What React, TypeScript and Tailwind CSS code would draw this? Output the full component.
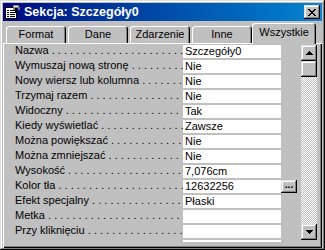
const rows: { label: string; value: string; builder?: boolean }[] = [
  { label: "Nazwa", value: "Szczegóły0" },
  { label: "Wymuszaj nową stronę", value: "Nie" },
  { label: "Nowy wiersz lub kolumna", value: "Nie" },
  { label: "Trzymaj razem", value: "Nie" },
  { label: "Widoczny", value: "Tak" },
  { label: "Kiedy wyświetlać", value: "Zawsze" },
  { label: "Można powiększać", value: "Nie" },
  { label: "Można zmniejszać", value: "Nie" },
  { label: "Wysokość", value: "7,076cm" },
  { label: "Kolor tła", value: "12632256", builder: true },
  { label: "Efekt specjalny", value: "Płaski" },
  { label: "Metka", value: "" },
  { label: "Przy kliknięciu", value: "" },
  { label: "", value: "" },
];

const tabs = ["Format", "Dane", "Zdarzenie", "Inne"];

const dots = " . . . . . . . . . . . . . . . . . . . . . . . . . . . . . .";

const raised =
  "shadow-[inset_-1px_-1px_#000,inset_1px_1px_#dfdfdf,inset_-2px_-2px_#808080,inset_2px_2px_#fff]";

function SheetIcon() {
  return (
    <svg width="16" height="16" viewBox="0 0 16 16" shapeRendering="crispEdges">
      <rect x="0.5" y="3.5" width="11" height="11" fill="#fff" stroke="#000" />
      <rect x="2" y="6" width="2" height="1" fill="#000" />
      <rect x="5" y="6" width="5" height="1" fill="#000" />
      <rect x="2" y="8" width="2" height="1" fill="#000" />
      <rect x="5" y="8" width="5" height="1" fill="#000" />
      <rect x="2" y="10" width="2" height="1" fill="#000" />
      <rect x="5" y="10" width="5" height="1" fill="#000" />
      <rect x="2" y="12" width="2" height="1" fill="#000" />
      <rect x="5" y="12" width="5" height="1" fill="#000" />
      <path d="M8 1h6v2h1v3h-2v-2h-3v2h-2z" fill="#808080" />
      <path d="M9 2h4v1h-4z" fill="#fff" />
      <path d="M10 4h2v5h-2z" fill="#000" />
    </svg>
  );
}

function Arrow({ down }: { down?: boolean }) {
  return (
    <svg width="7" height="4" viewBox="0 0 7 4" shapeRendering="crispEdges">
      {down ? (
        <path d="M0 0h7v1h-1v1h-1v1h-1v1h-1v-1h-1v-1h-1v-1h-1z" fill="#000" />
      ) : (
        <path d="M3 0h1v1h1v1h1v1h1v1h-7v-1h1v-1h1v-1h1z" fill="#000" />
      )}
    </svg>
  );
}

export default function App() {
  return (
    <div
      className={`w-[325px] h-[250px] bg-[#c0c0c0] p-[3px] flex flex-col overflow-hidden text-black font-['Liberation_Sans',Arial,sans-serif] ${raised}`}
    >
      <div className="h-[18px] shrink-0 flex items-center pl-[2px] pr-[2px] bg-gradient-to-r from-[#000080] to-[#1084d0]">
        <SheetIcon />
        <span className="ml-[3px] text-white font-bold text-[12.5px] leading-none">
          Sekcja: Szczegóły0
        </span>
        <div className={`ml-auto w-[16px] h-[14px] bg-[#c0c0c0] flex items-center justify-center ${raised}`}>
          <svg width="8" height="7" viewBox="0 0 8 7" shapeRendering="crispEdges">
            <path
              d="M0 0h2v1h1v1h2v-1h1v-1h2v1h-1v1h-1v1h-1v1h1v1h1v1h1v1h-2v-1h-1v-1h-2v1h-1v1h-2v-1h1v-1h1v-1h1v-1h-1v-1h-1v-1h-1z"
              fill="#000"
            />
          </svg>
        </div>
      </div>

      <div className="mt-[1px] h-[21px] shrink-0 flex items-end pl-[3px] gap-[2px] text-[11px] relative z-10">
        {tabs.map((t) => (
          <div
            key={t}
            className="w-[60px] h-[17px] rounded-t-[3px] flex items-center justify-center shadow-[inset_1px_1px_#fff,inset_-1px_0_#000,inset_-2px_0_#808080]"
          >
            {t}
          </div>
        ))}
        <div className="w-[64px] -ml-[2px] h-[21px] -mb-[1px] pb-[3px] bg-[#c0c0c0] rounded-t-[3px] flex items-center justify-center shadow-[inset_1px_1px_#fff,inset_-1px_0_#000,inset_-2px_0_#808080]">
          Wszystkie
        </div>
      </div>

      <div className="h-[205px] shrink-0 flex items-start pt-[2px] pl-[7px] pr-[5px] shadow-[inset_1px_1px_#fff,inset_-1px_-1px_#000,inset_-2px_-2px_#808080]">
        <div className="w-[287px] h-[197px] overflow-hidden text-[11px]">
          {rows.map((r, i) => (
            <div key={i} className="h-[15px] flex">
              <div className="w-[173px] pl-[5px] overflow-hidden whitespace-nowrap leading-[11px]">
                {r.label}
                {r.label && dots}
              </div>
              <div className="w-[98px] h-[13px] bg-white pl-[2px] leading-[13px] whitespace-nowrap overflow-hidden">
                {r.value}
              </div>
              {r.builder && (
                <div className={`w-[16px] h-[13px] flex items-center justify-center font-bold text-[10px] leading-none pb-[3px] ${raised}`}>
                  ...
                </div>
              )}
            </div>
          ))}
        </div>
        <div className="ml-[4px] w-[16px] h-[195px] flex flex-col">
          <div className={`h-[16px] flex items-center justify-center ${raised}`}>
            <Arrow />
          </div>
          <div className={`h-[16px] ${raised}`} />
          <div className="flex-1 bg-[image:repeating-conic-gradient(#c0c0c0_0%_25%,#ffffff_0%_50%)] bg-[length:2px_2px]" />
          <div className={`h-[16px] flex items-center justify-center ${raised}`}>
            <Arrow down />
          </div>
        </div>
      </div>
    </div>
  );
}
